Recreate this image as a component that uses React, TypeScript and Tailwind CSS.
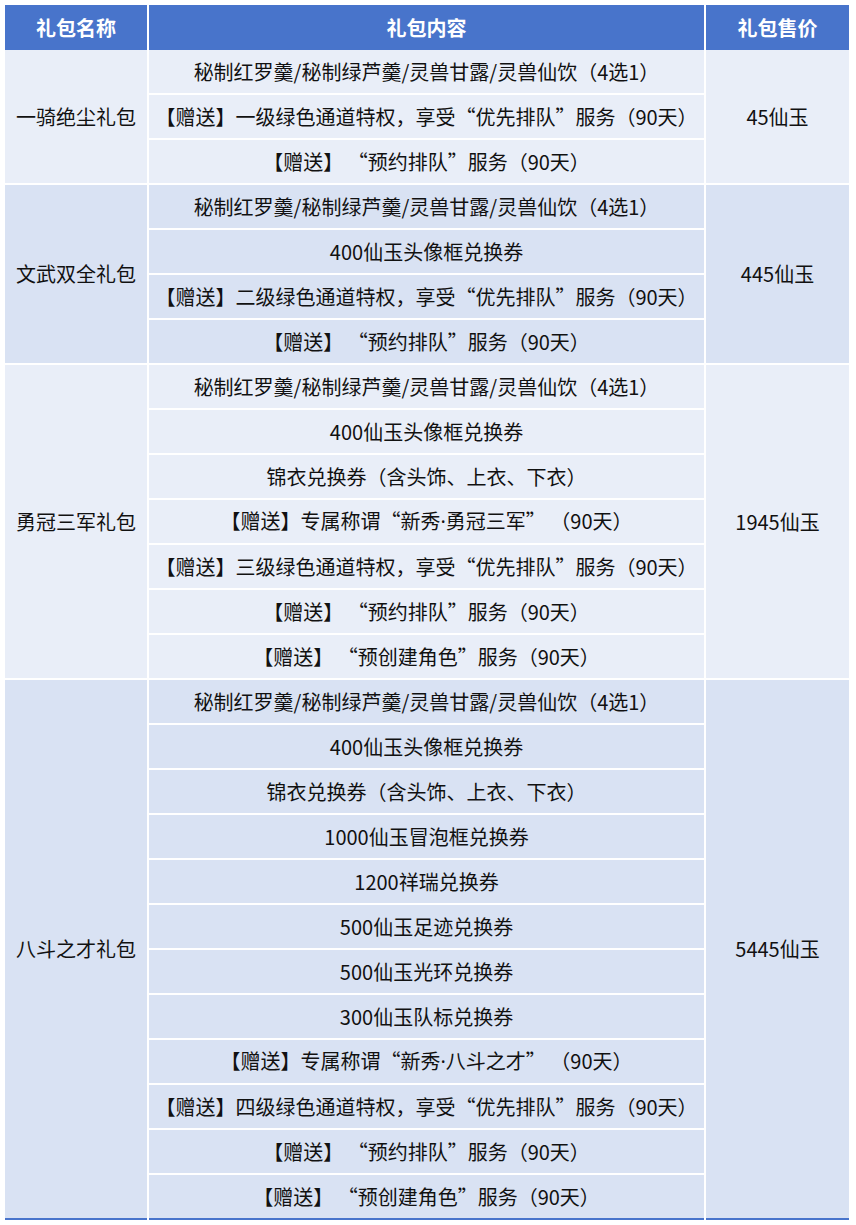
import React from 'react'

interface Pack {
  name: string
  price: string
  items: string[]
  dark: boolean
}

const FEED = '秘制红罗羹/秘制绿芦羹/灵兽甘露/灵兽仙饮（4选1）'

const packs: Pack[] = [
  {
    name: '一骑绝尘礼包',
    price: '45仙玉',
    dark: false,
    items: [FEED, '【赠送】一级绿色通道特权，享受“优先排队”服务（90天）', '【赠送】 “预约排队”服务（90天）'],
  },
  {
    name: '文武双全礼包',
    price: '445仙玉',
    dark: true,
    items: [
      FEED,
      '400仙玉头像框兑换券',
      '【赠送】二级绿色通道特权，享受“优先排队”服务（90天）',
      '【赠送】 “预约排队”服务（90天）',
    ],
  },
  {
    name: '勇冠三军礼包',
    price: '1945仙玉',
    dark: false,
    items: [
      FEED,
      '400仙玉头像框兑换券',
      '锦衣兑换券（含头饰、上衣、下衣）',
      '【赠送】专属称谓“新秀·勇冠三军” （90天）',
      '【赠送】三级绿色通道特权，享受“优先排队”服务（90天）',
      '【赠送】 “预约排队”服务（90天）',
      '【赠送】 “预创建角色”服务（90天）',
    ],
  },
  {
    name: '八斗之才礼包',
    price: '5445仙玉',
    dark: true,
    items: [
      FEED,
      '400仙玉头像框兑换券',
      '锦衣兑换券（含头饰、上衣、下衣）',
      '1000仙玉冒泡框兑换券',
      '1200祥瑞兑换券',
      '500仙玉足迹兑换券',
      '500仙玉光环兑换券',
      '300仙玉队标兑换券',
      '【赠送】专属称谓“新秀·八斗之才” （90天）',
      '【赠送】四级绿色通道特权，享受“优先排队”服务（90天）',
      '【赠送】 “预约排队”服务（90天）',
      '【赠送】 “预创建角色”服务（90天）',
    ],
  },
]

const cols = 'grid grid-cols-[142px_555px_143px] gap-x-[2px]'

// the middle dot is narrow in the original, so render it with a latin font
function Line({ text }: { text: string }) {
  const parts = text.split('·')
  return (
    <>
      {parts.map((s, i) => (
        <React.Fragment key={i}>
          {i > 0 && <span className="font-['Noto_Sans']">·</span>}
          {s}
        </React.Fragment>
      ))}
    </>
  )
}

export default function App() {
  return (
    <div
      className="min-h-[1225px] bg-white pl-[5px] pt-[5px] text-[20px] text-[#111]"
      style={{ fontFamily: '"Noto Sans CJK SC", "Noto Sans", sans-serif' }}
    >
      <div className="w-[844px]">
        {/* Header */}
        <div className={`${cols} h-[45px] font-bold text-white`}>
          <div className="flex items-center justify-center bg-[#4874cb]">礼包名称</div>
          <div className="flex items-center justify-center bg-[#4874cb]">礼包内容</div>
          <div className="flex items-center justify-center bg-[#4874cb]">礼包售价</div>
        </div>

        {/* Groups */}
        <div className="flex flex-col gap-[2px]">
          {packs.map(p => {
            const bg = p.dark ? 'bg-[#d9e2f3]' : 'bg-[#e9eef8]'
            return (
              <div key={p.name} className={cols}>
                <div className={`flex items-center justify-center ${bg}`}>{p.name}</div>
                <div className="flex flex-col gap-[2px]">
                  {p.items.map((it, i) => (
                    <div key={i} className={`flex h-[43px] items-center justify-center whitespace-pre ${bg}`}>
                      <span><Line text={it} /></span>
                    </div>
                  ))}
                </div>
                <div className={`flex items-center justify-center ${bg}`}>{p.price}</div>
              </div>
            )
          })}
        </div>

        {/* Bottom rule */}
        <div className={`${cols} h-[2px]`}>
          <div className="bg-[#4874cb]" />
          <div className="bg-[#4874cb]" />
          <div className="bg-[#4874cb]" />
        </div>
      </div>
    </div>
  )
}
